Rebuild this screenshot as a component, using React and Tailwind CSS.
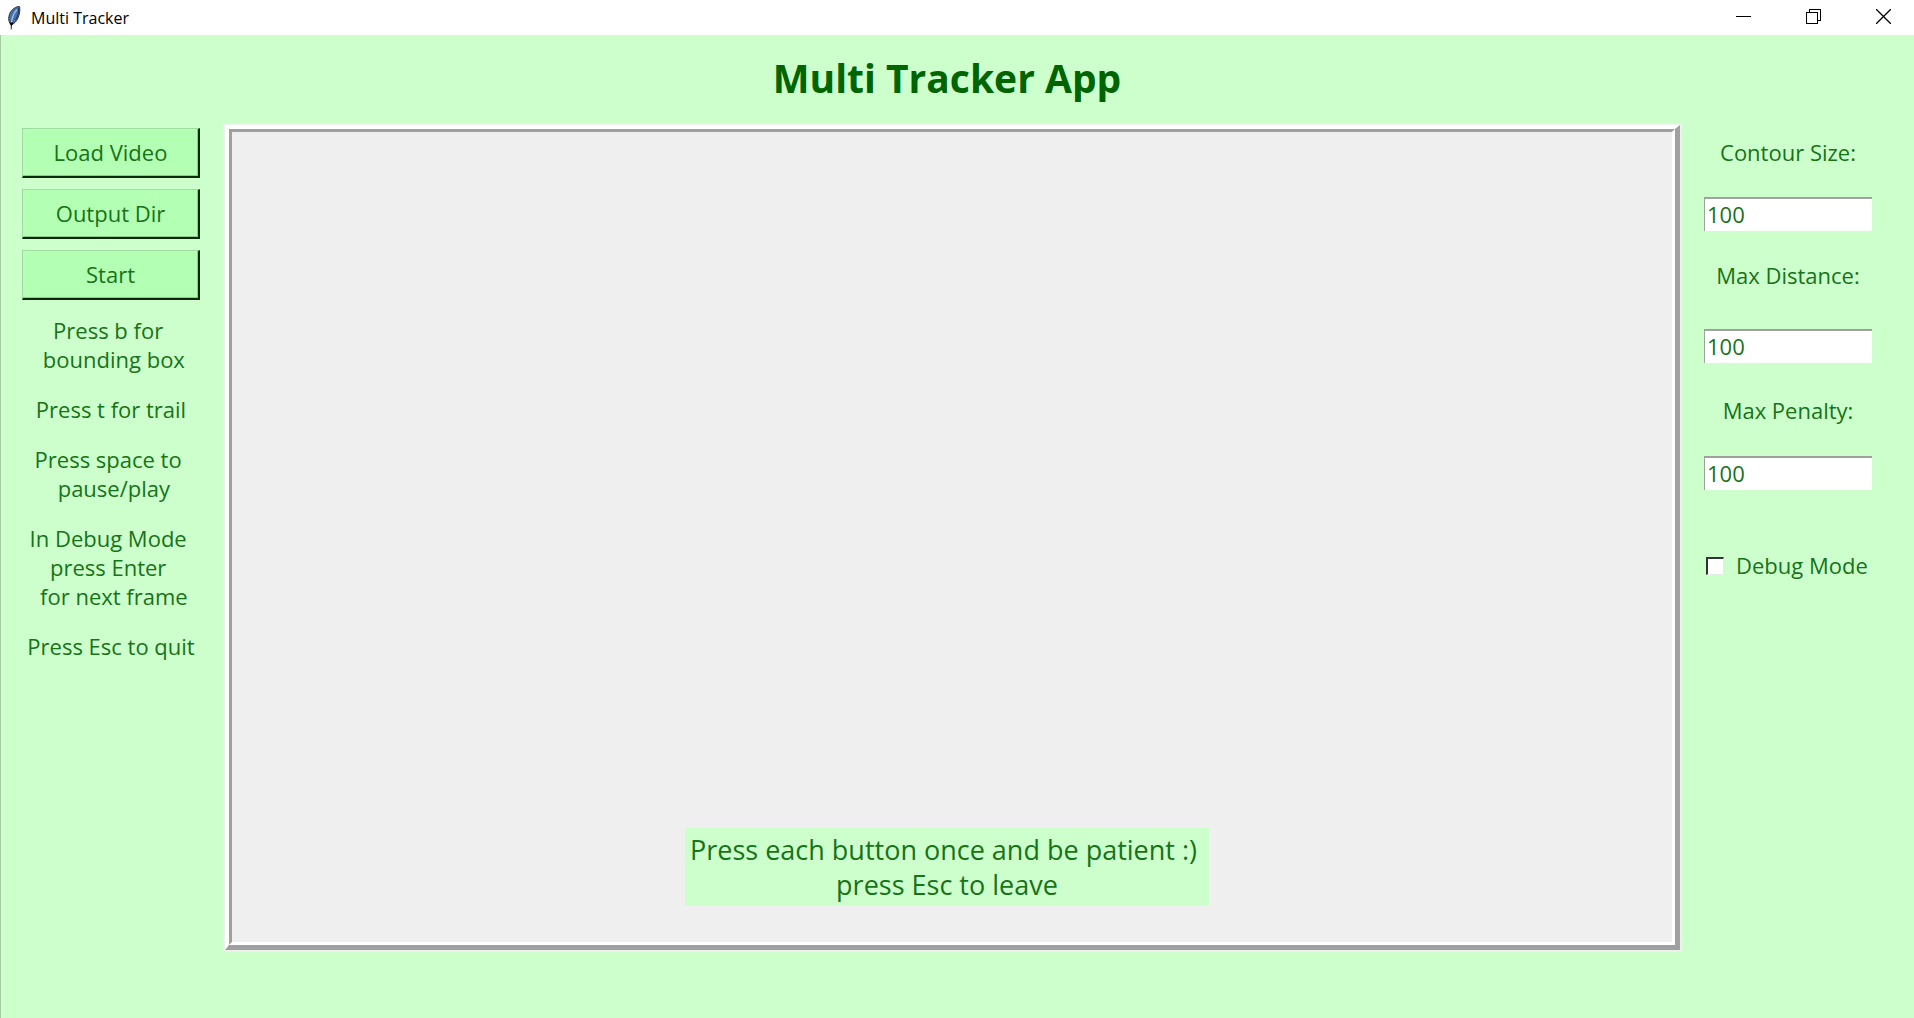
const sans = "font-['Open_Sans','Noto_Sans',sans-serif]";

function Feather() {
  return (
    <svg width="14" height="24" viewBox="0 0 14 24" aria-hidden="true">
      <path d="M4.500 19C1.500 16.500 .8 12 3 7C5 3 9 .5 12.500 .5C13.500 5 12 11 9.500 14.500C8 17 6 18 4.500 19Z" fill="#4470ab" stroke="#2b3442" strokeWidth="1" />
      <path d="M10 3.500C6.500 7.500 4.800 12 4.500 17" fill="none" stroke="#9db9dc" strokeWidth="1.500" />
      <path d="M11.500 2C12 6 11 10 8.500 14" fill="none" stroke="#24344f" strokeWidth="1" />
      <path d="M2.500 16.500L6.500 16.500L4.800 19.500L4.500 23.500H3.800L3.800 19.500Z" fill="#000" />
    </svg>
  );
}

function WindowButton({ label, children }) {
  return (
    <button type="button" aria-label={label} className="flex h-[33px] items-center justify-center">
      <svg width="15" height="15" viewBox="0 0 15 15" fill="none" stroke="#000" shapeRendering="crispEdges">
        {children}
      </svg>
    </button>
  );
}

function TitleBar() {
  return (
    <header className="flex h-[35px] items-start justify-between bg-white">
      <div className="flex items-center gap-[10px] pt-[5px] pl-[7px]">
        <Feather />
        <span className="text-[16px] leading-[26px] text-black">Multi Tracker</span>
      </div>
      <div className="flex gap-[55px] pr-[23px]">
        <WindowButton label="Minimize"><path d="M0 7.500H15" /></WindowButton>
        <WindowButton label="Restore"><path d="M.5 3.500H11.500V14.500H.5ZM3.500 3.500V.5H14.500V11.500H11.500" /></WindowButton>
        <WindowButton label="Close"><path d="M0 0L15 15M15 0L0 15" shapeRendering="auto" strokeWidth="1.300" /></WindowButton>
      </div>
    </header>
  );
}

function ActionButton({ children }) {
  return (
    <button type="button" className="h-[50px] w-full border-t border-r-2 border-b-2 border-l border-t-[#9fdc9f] border-r-[#0b2a0b] border-b-[#0b2a0b] border-l-[#9fdc9f] bg-[#b3ffb3] shadow-[inset_-1px_-1px_0_#8fc98f]">
      {children}
    </button>
  );
}

function Field({ id, label, className }) {
  return (
    <div className={"flex flex-col " + className}>
      <label htmlFor={id} className="text-center">{label}</label>
      <input id={id} type="text" defaultValue="100" className="h-[34px] w-full border-t-2 border-l border-t-[#a0a0a0] border-l-[#a0a0a0] bg-white pb-[2px] pl-[2px] outline-none" />
    </div>
  );
}

const hints = [
  "Press b for \n bounding box",
  "Press t for trail",
  "Press space to \n pause/play",
  "In Debug Mode \npress Enter \n for next frame",
  "Press Esc to quit",
];

export default function App() {
  return (
    <div className={"flex min-h-screen flex-col bg-[#ccffcc] text-[#177317] " + sans}>
      <TitleBar />
      <main className="flex grow flex-col border-l border-[#a3cca3] pr-[42px] pb-[66px] pl-[21px]">
        <h1 className="flex h-[88px] items-center justify-center pb-[2px] text-[39px] font-bold text-[#006400]">Multi Tracker App</h1>
        <div className="flex grow gap-[22px] text-[22px] leading-[29px]">
          <aside className="flex w-[179px] shrink-0 flex-col pt-[5px] pr-px">
            <div className="flex flex-col gap-[11px]">
              <ActionButton>Load Video</ActionButton>
              <ActionButton>Output Dir</ActionButton>
              <ActionButton>Start</ActionButton>
            </div>
            <div className="flex flex-col gap-[21px] pt-4 text-center whitespace-pre">
              {hints.map((hint) => <p key={hint}>{hint}</p>)}
            </div>
          </aside>
          <section className="flex grow border-2 border-[#efefef]">
            <div className="flex grow border-t-4 border-r-[5px] border-b-[5px] border-l-4 border-t-white border-r-[#a0a0a0] border-b-[#a0a0a0] border-l-white">
              <div className="flex grow items-end justify-center border-[3px] border-t-[#a0a0a0] border-r-white border-b-white border-l-[#a0a0a0] bg-[#efefef] pr-[10px] pb-9">
                <p className="bg-[#ccffcc] px-[5px] py-1 text-center text-[27px] leading-[35px] whitespace-pre">{"Press each button once and be patient :) \npress Esc to leave"}</p>
              </div>
            </div>
          </section>
          <aside className="flex w-[168px] shrink-0 flex-col pt-[15px]">
            <Field id="contour" label="Contour Size:" className="gap-[30px]" />
            <Field id="distance" label="Max Distance:" className="gap-[39px] pt-[30px]" />
            <Field id="penalty" label="Max Penalty:" className="gap-[31px] pt-[33px]" />
            <label className="mt-[61px] flex items-center gap-3 pl-[2px] whitespace-nowrap">
              <input type="checkbox" className="size-[18px] shrink-0 appearance-none border-t-2 border-r border-b border-l-2 border-t-[#333] border-r-[#e0f0e0] border-b-[#e0f0e0] border-l-[#333] bg-white" />
              Debug Mode
            </label>
          </aside>
        </div>
      </main>
    </div>
  );
}
